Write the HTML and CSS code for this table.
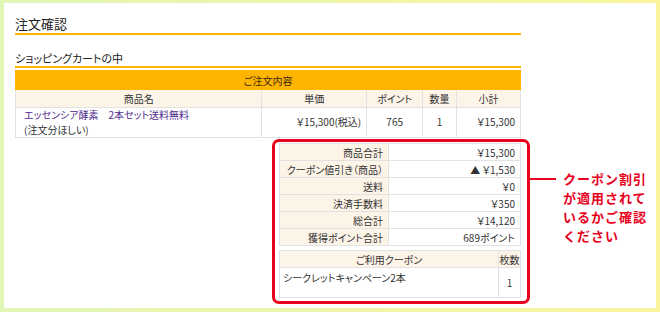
FILE: index.html
```html
<!DOCTYPE html>
<html lang="ja">
<head>
    <meta charset="UTF-8">
    <title>注文確認</title>
    <link rel="stylesheet" href="styles.css">
</head>
<body>
    <div class="frame">
        <div class="page">
            <div class="content">
                <h1 class="page-title">注文確認</h1>
                <h2 class="section-title">ショッピングカートの中</h2>

                <table class="cart">
                    <tr>
                        <th class="cart-caption" colspan="5">ご注文内容</th>
                    </tr>
                    <tr class="cart-head">
                        <th class="col-name">商品名</th>
                        <th class="col-price">単価</th>
                        <th class="col-point">ポイント</th>
                        <th class="col-qty">数量</th>
                        <th class="col-sub">小計</th>
                    </tr>
                    <tr class="cart-item">
                        <td class="item-name">
                            <a href="#">エッセンシア酵素　2本セット送料無料</a><br>
                            (注文分ほしい)
                        </td>
                        <td class="num">￥15,300(税込)</td>
                        <td class="center">765</td>
                        <td class="center">1</td>
                        <td class="num">￥15,300</td>
                    </tr>
                </table>

                <div class="summary-row">
                    <div class="summary-box">
                        <table class="totals">
                            <tr><th>商品合計</th><td>￥15,300</td></tr>
                            <tr><th>クーポン値引き（商品）</th><td>▲ ￥1,530</td></tr>
                            <tr><th>送料</th><td>￥0</td></tr>
                            <tr><th>決済手数料</th><td>￥350</td></tr>
                            <tr><th>総合計</th><td>￥14,120</td></tr>
                            <tr><th>獲得ポイント合計</th><td>689ポイント</td></tr>
                        </table>

                        <table class="coupons">
                            <tr>
                                <th class="coupon-name">ご利用クーポン</th>
                                <th class="coupon-count">枚数</th>
                            </tr>
                            <tr>
                                <td class="coupon-name">シークレットキャンペーン2本</td>
                                <td class="coupon-count">1</td>
                            </tr>
                        </table>
                    </div>

                    <div class="callout">
                        <span class="callout-line"></span>
                        <p class="callout-text">クーポン割引<br>が適用されて<br>いるかご確認<br>ください</p>
                    </div>
                </div>
            </div>
        </div>
    </div>
</body>
</html>
```

FILE: styles.css
```css
* {
    margin: 0;
    padding: 0;
    box-sizing: border-box;
}

body {
    font-family: "Noto Sans CJK JP", "Noto Sans", sans-serif;
    color: #333;
    background-color: #fff;
}

/* 外枠のグラデーション */
.frame {
    width: 660px;
    height: 312px;
    padding: 3px 4px 4px 4px;
    background: linear-gradient(to right, #e2f6b6, #faf59e);
}

.page {
    height: 100%;
    background-color: #fff;
    padding: 11px 0 0 11px;
}

.content {
    width: 506px;
}

.page-title {
    font-size: 13px;
    font-weight: normal;
    line-height: 19px;
    color: #222;
    border-bottom: 2px solid #ffb400;
}

.section-title {
    margin-top: 15px;
    font-size: 11px;
    font-weight: normal;
    line-height: 16px;
    color: #222;
    font-feature-settings: "palt";
    border-bottom: 2px solid #ffb400;
}

/* カートの表 */
.cart {
    width: 506px;
    margin-top: 2px;
    border-collapse: collapse;
    font-size: 10px;
    font-feature-settings: "palt";
}

.cart th,
.cart td {
    border: 1px solid #e2e2e2;
    font-weight: normal;
}

.cart-caption {
    height: 19px;
    background-color: #ffb400;
    border-color: #ffb400 !important;
    color: #3a2a10;
}

.cart-head th {
    height: 18px;
    background-color: #fdf4e8;
}

.col-name { width: 247px; }
.col-price { width: 105px; }
.col-point { width: 56px; }
.col-qty { width: 34px; }
.col-sub { width: 64px; }

.cart-item td {
    height: 29px;
    line-height: 14.5px;
}

.item-name {
    padding: 0 8px;
}

.item-name a {
    color: #4f2b8f;
    text-decoration: none;
}

.num {
    text-align: right;
    padding-right: 5px;
}

.center {
    text-align: center;
}

/* 合計エリア */
.summary-row {
    display: flex;
    align-items: flex-start;
    margin-top: 1px;
    margin-left: 257px;
}

.summary-box {
    flex-shrink: 0;
    width: 258px;
    padding: 1px 6px 3px 4px;
    border: 3px solid #e8001c;
    border-radius: 7px;
}

.totals,
.coupons {
    width: 242px;
    border-collapse: collapse;
    font-size: 10px;
    font-feature-settings: "palt";
}

.totals th,
.totals td,
.coupons th,
.coupons td {
    border: 1px solid #e2e2e2;
    font-weight: normal;
    height: 17px;
}

.totals th {
    width: 109px;
    text-align: right;
    padding-right: 5px;
    background-color: #fdf4e8;
}

.totals td {
    text-align: right;
    padding-right: 5px;
}

.coupons {
    margin-top: 4px;
}

.coupons th {
    background-color: #fdf4e8;
    text-align: center;
}

.coupons td {
    height: 30px;
}

td.coupon-name {
    vertical-align: top;
    padding: 2px 3px;
}

.coupon-count {
    width: 22px;
    text-align: center;
}

/* 注意書き */
.callout {
    display: flex;
    align-items: flex-start;
    margin-left: -1px;
}

.callout-line {
    display: block;
    width: 27px;
    height: 2px;
    margin-top: 39px;
    background-color: #e8001c;
}

.callout-text {
    margin-top: 30px;
    margin-left: 7px;
    font-size: 13px;
    font-weight: bold;
    line-height: 19px;
    letter-spacing: 1px;
    color: #e8001c;
    white-space: nowrap;
}
```
